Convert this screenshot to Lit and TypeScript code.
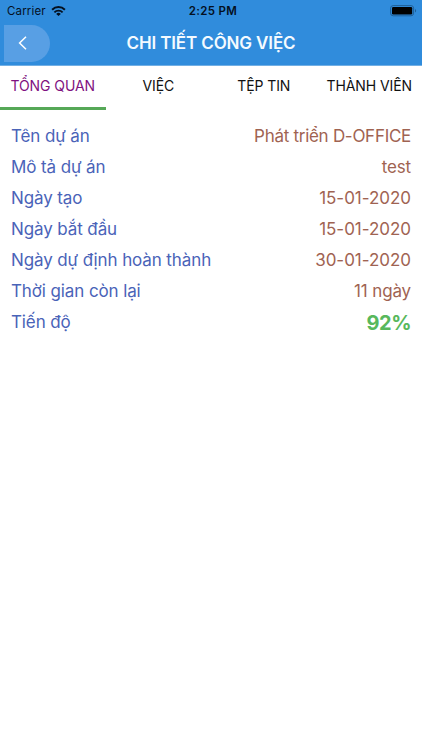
import { LitElement, html, css } from "lit";
import { customElement, state } from "lit/decorators.js";
import { classMap } from "lit/directives/class-map.js";

interface Row {
  label: string;
  value: string;
  kind?: "name" | "text" | "strong";
}

@customElement("status-bar")
class StatusBar extends LitElement {
  static styles = css`
    :host {
      display: grid;
      grid-template-columns: 1fr auto 1fr;
      align-items: center;
      height: 22px;
      padding: 0 5px 0 7px;
      color: #04101f;
      font-size: 11.5px;
    }
    .carrier {
      display: flex;
      align-items: center;
      gap: 5px;
      letter-spacing: 0.15px;
    }
    .time {
      padding-left: 2px;
      font-weight: 600;
      letter-spacing: 0.33px;
    }
    .battery {
      justify-self: end;
    }
    svg {
      display: block;
    }
  `;
  render() {
    return html`
      <div class="carrier">
        <span>Carrier</span>
        <svg width="15" height="11" viewBox="0 0 15 11" fill="none" stroke="currentColor">
          <path d="M1.1 3.7a9.2 9.2 0 0 1 12.8 0" stroke-width="2" />
          <path d="M3.4 6.3a5.8 5.8 0 0 1 8.2 0" stroke-width="1.9" />
          <path d="M7.5 10.1 5.2 7.9a3.2 3.2 0 0 1 4.6 0z" fill="currentColor" stroke="none" />
        </svg>
      </div>
      <span class="time">2:25 PM</span>
      <svg class="battery" width="27" height="12" viewBox="0 0 27 12">
        <rect x="0.6" y="0.6" width="23" height="10.2" rx="2.6" fill="none" stroke="#1f5f97" stroke-width="1" />
        <rect x="2" y="2" width="20.2" height="7.4" rx="1.2" fill="#000" />
        <path d="M25 4a2 2 0 0 1 0 3.6z" fill="#1f5f97" />
      </svg>
    `;
  }
}

@customElement("app-root")
class AppRoot extends LitElement {
  @state() private active = 0;

  private tabs = ["TỔNG QUAN", "VIỆC", "TỆP TIN", "THÀNH VIÊN"];

  private rows: Row[] = [
    { label: "Tên dự án", value: "Phát triển D-OFFICE", kind: "name" },
    { label: "Mô tả dự án", value: "test", kind: "text" },
    { label: "Ngày tạo", value: "15-01-2020" },
    { label: "Ngày bắt đầu", value: "15-01-2020" },
    { label: "Ngày dự định hoàn thành", value: "30-01-2020" },
    { label: "Thời gian còn lại", value: "11 ngày", kind: "text" },
    { label: "Tiến độ", value: "92%", kind: "strong" },
  ];

  static styles = css`
    :host {
      display: block;
      height: 750px;
      background: #fff;
      font-family: Inter, "Noto Sans", sans-serif;
      overflow: hidden;
    }
    .top {
      box-sizing: border-box;
      height: 66px;
      background: #308cdc;
      border-bottom: 1px solid #72afe4;
    }
    .nav {
      display: grid;
      grid-template-columns: 46px 1fr 46px;
      align-items: center;
      height: 43px;
      padding: 0 4px;
    }
    .back {
      display: flex;
      align-items: center;
      width: 46px;
      height: 37px;
      padding: 0 0 1px 14px;
      box-sizing: border-box;
      border: 0;
      border-radius: 0 18.5px 18.5px 0;
      background: #589fe4;
    }
    .title {
      margin: 0;
      padding-bottom: 2px;
      text-align: center;
      color: #f4faff;
      font-size: 17px;
      line-height: 22px;
      font-weight: 600;
      letter-spacing: -0.13px;
      white-space: nowrap;
    }
    .tabs {
      display: grid;
      grid-template-columns: repeat(4, 1fr);
      height: 44px;
    }
    .tab {
      display: flex;
      justify-content: center;
      box-sizing: border-box;
      padding: 11px 0 0;
      border: 0;
      border-bottom: 3px solid transparent;
      background: none;
      color: #111;
      font: 400 14px/18px Inter, "Noto Sans", sans-serif;
      letter-spacing: -0.08px;
      white-space: nowrap;
    }
    .tab.active {
      color: #80117f;
      border-bottom-color: #56a857;
    }
    .rows {
      margin: 0;
      padding: 11px 11px 0;
    }
    .row {
      display: flex;
      justify-content: space-between;
      align-items: center;
      height: 30.9px;
      font-size: 17px;
    }
    dt {
      color: #4a63b8;
      letter-spacing: -0.11px;
    }
    dd {
      margin: 0;
      color: #9f6352;
    }
    dd.date {
      letter-spacing: -0.03px;
    }
    dd.name {
      letter-spacing: -0.28px;
    }
    dd.text {
      letter-spacing: -0.14px;
    }
    dd.strong {
      color: #58b85c;
      font-size: 20px;
      font-weight: 700;
      letter-spacing: -0.5px;
      padding-top: 2px;
    }
  `;

  render() {
    return html`
      <header class="top">
        <status-bar></status-bar>
        <div class="nav">
          <button class="back" aria-label="Back">
            <svg width="10" height="14" viewBox="0 0 10 14" fill="none" stroke="#fff" stroke-width="1.5">
              <path d="M8 0.8 1.6 7 8 13.2" />
            </svg>
          </button>
          <h1 class="title">CHI TIẾT CÔNG VIỆC</h1>
        </div>
      </header>
      <nav class="tabs">
        ${this.tabs.map(
          (t, i) => html`<button
            class=${classMap({ tab: true, active: i === this.active })}
            @click=${() => (this.active = i)}
          >${t}</button>`
        )}
      </nav>
      <dl class="rows">
        ${this.rows.map(
          (r) => html`<div class="row">
            <dt>${r.label}</dt>
            <dd class=${r.kind ?? "date"}>${r.value}</dd>
          </div>`
        )}
      </dl>
    `;
  }
}
